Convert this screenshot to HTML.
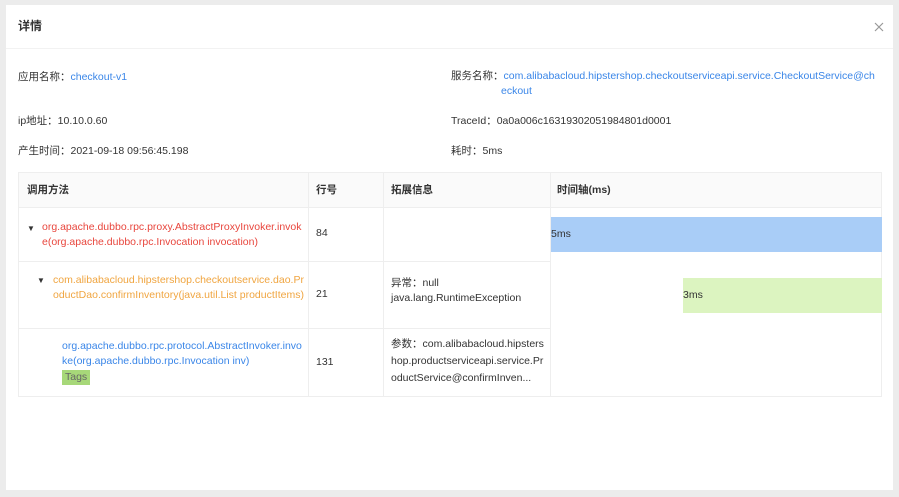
<!DOCTYPE html><html><head><meta charset="utf-8"><style>
body{margin:0;width:899px;height:497px;background:#ececec;font-family:"Liberation Sans","Noto Sans CJK SC",sans-serif;font-size:10.5px;color:#333;position:relative;overflow:hidden}
.p{position:absolute;left:6px;top:5px;width:887px;height:485px;background:#fff}
.a{position:absolute;white-space:nowrap}
.b{color:#3a86e8}
.t{position:absolute;left:18px;top:172px;width:864px;height:225px;border:1px solid #eee;box-sizing:border-box}
.c{position:absolute;box-sizing:border-box;line-height:15px}
.h{background:#fafafa;font-weight:bold;border-bottom:1px solid #eee}
.v{position:absolute;top:0;bottom:0;border-left:1px solid #eee}
.r{position:absolute;left:0;width:532px;border-top:1px solid #eee}
</style></head><body>
<div class="p"></div>
<div class="a" style="left:18px;top:17px;font-size:12px;font-weight:bold">详情</div>
<svg style="position:absolute;left:874px;top:22px" width="10" height="10"><path d="M1 1L9 9M9 1L1 9" stroke="#999" stroke-width="1.2"/></svg>
<div style="position:absolute;left:6px;top:48px;width:887px;border-top:1px solid #f2f2f2"></div>
<div class="a" style="left:18px;top:69px">应用名称：<span class="b">checkout-v1</span></div>
<div class="a" style="left:451px;top:69px;line-height:15px">服务名称：<span class="b">com.alibabacloud.hipstershop.checkoutserviceapi.service.CheckoutService@ch</span><br><span class="b" style="margin-left:50px">eckout</span></div>
<div class="a" style="left:18px;top:113px">ip地址：10.10.0.60</div>
<div class="a" style="left:451px;top:113px">TraceId：0a0a006c16319302051984801d0001</div>
<div class="a" style="left:18px;top:143px">产生时间：2021-09-18 09:56:45.198</div>
<div class="a" style="left:451px;top:143px">耗时：5ms</div>
<div class="t">
<div class="c h" style="left:0;top:0;width:862px;height:35px"></div>
<div class="c" style="left:8px;top:10px;font-weight:bold">调用方法</div>
<div class="c" style="left:297px;top:10px;font-weight:bold">行号</div>
<div class="c" style="left:372px;top:10px;font-weight:bold">拓展信息</div>
<div class="c" style="left:538px;top:10px;font-weight:bold">时间轴(ms)</div>
<div class="v" style="left:289px"></div><div class="v" style="left:364px"></div><div class="v" style="left:531px"></div>
<div class="r" style="top:88px"></div><div class="r" style="top:155px"></div>
<div class="c" style="left:8px;top:48px;font-size:8px">▼</div>
<div class="c" style="left:23px;top:47px;color:#e8463d;width:262px;word-break:break-all">org.apache.dubbo.rpc.proxy.AbstractProxyInvoker.invoke(org.apache.dubbo.rpc.Invocation invocation)</div>
<div class="c" style="left:297px;top:53px">84</div>
<div class="c" style="left:532px;top:44px;width:331px;height:35px;background:#a9cdf7;line-height:35px">5ms</div>
<div class="c" style="left:18px;top:100px;font-size:8px">▼</div>
<div class="c" style="left:34px;top:100px;color:#f0a540;width:252px;word-break:break-all">com.alibabacloud.hipstershop.checkoutservice.dao.ProductDao.confirmInventory(java.util.List productItems)</div>
<div class="c" style="left:297px;top:114px">21</div>
<div class="c" style="left:372px;top:103px">异常：null<br>java.lang.RuntimeException</div>
<div class="c" style="left:664px;top:105px;width:199px;height:35px;background:#dcf4c0;line-height:35px">3ms</div>
<div class="c" style="left:43px;top:166px;color:#3a86e8;width:242px;word-break:break-all">org.apache.dubbo.rpc.protocol.AbstractInvoker.invoke(org.apache.dubbo.rpc.Invocation inv)</div>
<div class="c" style="left:43px;top:197px;background:#a7d879;color:#666;padding:0 3px">Tags</div>
<div class="c" style="left:297px;top:182px">131</div>
<div class="c" style="left:372px;top:163px;width:158px;line-height:17px;word-break:break-all">参数：com.alibabacloud.hipstershop.productserviceapi.service.ProductService@confirmInven...</div>
</div>
</body></html>
